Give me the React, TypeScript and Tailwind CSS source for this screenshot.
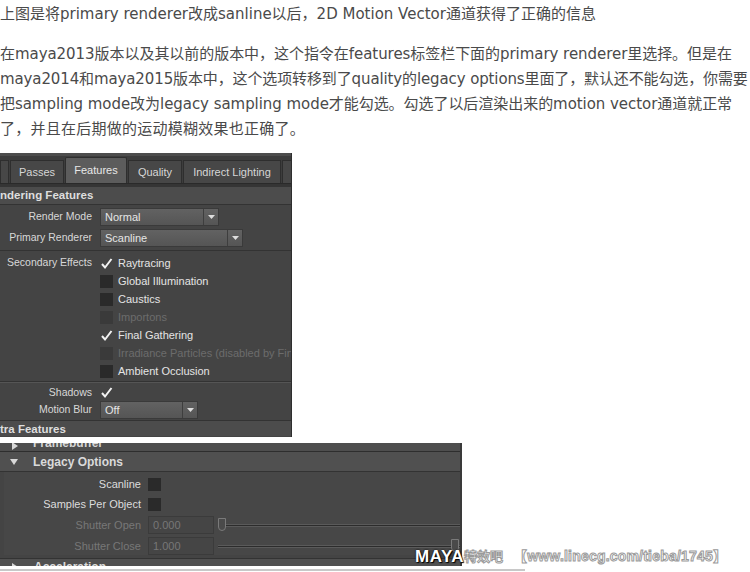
import React from "react";

const cjk = { fontFamily: '"DejaVu Sans", "Noto Sans CJK SC", sans-serif' };
const ui = { fontFamily: '"Liberation Sans", Arial, sans-serif' };
const mark = { fontFamily: '"Liberation Sans", "Noto Sans CJK SC", sans-serif' };

const Check = ({ on, dim }: { on?: boolean; dim?: boolean }) => (
  <span
    className={`w-[13px] h-[13px] flex items-center justify-center shrink-0 ${
      on ? "bg-transparent" : dim ? "bg-[#3a3a3a]" : "bg-[#2a2a2a]"
    }`}
  >
    {on && (
      <svg width="13" height="13" viewBox="0 0 13 13">
        <path d="M2 7 L5 10.5 L11.5 2" stroke="#f2f2f2" strokeWidth="2" fill="none" />
      </svg>
    )}
  </span>
);

const Dropdown = ({ value, width }: { value: string; width: string }) => (
  <div className={`${width} h-[18px] shrink-0 flex bg-gradient-to-b from-[#626262] to-[#555] border border-[#3a3a3a]`}>
    <span className="flex-1 pl-1 text-[11px] leading-[16px] text-[#e6e6e6]">{value}</span>
    <span className="w-[15px] border-l border-[#3e3e3e] flex items-center justify-center">
      <svg width="7" height="4" viewBox="0 0 7 4">
        <path d="M0 0 L7 0 L3.5 4 Z" fill="#ddd" />
      </svg>
    </span>
  </div>
);

const Tab = ({ label, active, w }: { label: string; active?: boolean; w: string }) => (
  <div
    className={`${w} shrink-0 flex items-center justify-center text-[11px] border border-[#2e2e2e] border-b-0 ${
      active ? "h-[26px] bg-[#5c5c5c] text-[#e8e8e8] rounded-t-[2px]" : "h-[23px] bg-[#474747] text-[#d6d6d6]"
    }`}
  >
    {label}
  </div>
);

const Label = ({ text }: { text: string }) => (
  <span className="w-[100px] shrink-0 text-right pr-[8px] text-[10.5px] text-[#d8d8d8] whitespace-nowrap">{text}</span>
);

const EffectRow = ({ label, on, dim, lead, h = "h-[18px]" }: { label: string; on?: boolean; dim?: boolean; lead?: string; h?: string }) => (
  <div className={`flex items-center ${h}`}>
    <Label text={lead ?? ""} />
    <Check on={on} dim={dim} />
    <span className={`ml-[5px] text-[11px] whitespace-nowrap ${dim ? "text-[#6c6c6c]" : "text-[#e4e4e4]"}`}>{label}</span>
  </div>
);

const Slider = ({ pos }: { pos: "start" | "end" }) => (
  <div className="flex-1 relative h-[16px] flex items-center">
    <div className="w-full h-[3px] bg-[#2c2c2c] border-y border-[#5a5a5a]" />
    <span
      className={`absolute top-[1px] w-[8px] h-[13px] bg-[#4a4a4a] border border-[#7a7a7a] rounded-b-[4px] ${
        pos === "start" ? "left-0" : "right-[1px]"
      }`}
    />
  </div>
);

export default function App() {
  return (
    <div className="w-[750px] h-[572px] bg-white overflow-hidden relative" style={cjk}>
      <div className="text-[15px] text-[#4a4a4a]">
        <p className="leading-[25px] pt-[2px] whitespace-nowrap">
          上图是将primary renderer改成sanline以后，2D Motion Vector通道获得了正确的信息
        </p>
        <div className="mt-[15px] leading-[25px] whitespace-nowrap tracking-[-0.05px]">
          <p>在maya2013版本以及其以前的版本中，这个指令在features标签栏下面的primary renderer里选择。但是在</p>
          <p className="tracking-[-0.12px]">maya2014和maya2015版本中，这个选项转移到了quality的legacy options里面了，默认还不能勾选，你需要</p>
          <p>把sampling mode改为legacy sampling mode才能勾选。勾选了以后渲染出来的motion vector通道就正常</p>
          <p className="tracking-[0.25px]">了，并且在后期做的运动模糊效果也正确了。</p>
        </div>
      </div>

      {/* screenshot 1: Features tab */}
      <div className="mt-[11px] w-[292px] h-[284px] overflow-hidden bg-[#444] border-r border-[#2e2e2e]" style={ui}>
        <div className="h-[3px] bg-[#4d4d4d]" />
        <div className="h-[27px] flex items-end gap-[1px] bg-[#3d3d3d]">
          <Tab label="" w="w-[9px]" />
          <Tab label="Passes" w="w-[54px]" />
          <Tab label="Features" active w="w-[62px]" />
          <Tab label="Quality" w="w-[54px]" />
          <Tab label="Indirect Lighting" w="w-[98px]" />
          <Tab label="" w="w-[12px]" />
        </div>
        <div className="h-[4px] bg-[#353535] border-t border-[#2a2a2a]" />
        <div className="h-[18px] bg-[#4c4c4c] border-b border-[#333] text-[11.5px] font-bold text-[#dedede] leading-[17px] whitespace-nowrap">
          ndering Features
        </div>
        <div className="pt-[3px] pb-[3px] flex flex-col gap-[3px]">
          <div className="flex items-center h-[18px]">
            <Label text="Render Mode" />
            <Dropdown value="Normal" width="w-[119px]" />
          </div>
          <div className="flex items-center h-[18px]">
            <Label text="Primary Renderer" />
            <Dropdown value="Scanline" width="w-[143px]" />
          </div>
        </div>
        <div className="pt-[3px] pb-[1px] border-t border-[#333] border-b border-b-[#333]">
          <EffectRow lead="Secondary Effects" label="Raytracing" on />
          <EffectRow label="Global Illumination" />
          <EffectRow label="Caustics" />
          <EffectRow label="Importons" dim />
          <EffectRow label="Final Gathering" on />
          <EffectRow label="Irradiance Particles (disabled by Final Gather)" dim />
          <EffectRow label="Ambient Occlusion" />
        </div>
        <div className="pt-[1px] pb-[1px] border-t border-[#555]">
          <EffectRow lead="Shadows" label="" on h="h-[17px]" />
          <div className="flex items-center h-[18px]">
            <Label text="Motion Blur" />
            <Dropdown value="Off" width="w-[98px]" />
          </div>
        </div>
        <div className="h-[16px] bg-[#4c4c4c] border-t border-[#333] text-[11.5px] font-bold text-[#dedede] leading-[16px] whitespace-nowrap">
          tra Features
        </div>
      </div>

      {/* screenshot 2: Legacy Options */}
      <div className="mt-[6px] w-[462px] h-[123px] overflow-hidden bg-[#444] border-r-2 border-[#3a3a3a]" style={ui}>
        <div className="h-[9px] bg-[#4e4e4e] border-b border-[#2e2e2e] overflow-hidden flex items-end">
          <svg className="ml-[12px] mb-[1px]" width="6" height="8" viewBox="0 0 6 8">
            <path d="M0 0 L6 4 L0 8 Z" fill="#d8d8d8" />
          </svg>
          <div className="ml-[15px] text-[12px] font-bold text-[#d6d6d6] leading-[15px]">Framebuffer</div>
        </div>
        <div className="h-[20px] bg-[#505050] border-b border-[#333] flex items-center">
          <svg className="ml-[10px]" width="8" height="6" viewBox="0 0 8 6">
            <path d="M0 0 L8 0 L4 6 Z" fill="#d8d8d8" />
          </svg>
          <span className="ml-[15px] text-[12px] font-bold text-[#dadada]">Legacy Options</span>
        </div>
        <div className="bg-[#474747] ml-[4px] pt-[4px] flex flex-col gap-[3px]">
          <div className="flex items-center h-[17px]">
            <span className="w-[144px] text-right pr-[7px] text-[11px] text-[#dcdcdc]">Scanline</span>
            <span className="w-[13px] h-[13px] bg-[#2a2a2a]" />
          </div>
          <div className="flex items-center h-[17px]">
            <span className="w-[144px] text-right pr-[7px] text-[11px] text-[#dcdcdc]">Samples Per Object</span>
            <span className="w-[13px] h-[13px] bg-[#2a2a2a]" />
          </div>
          <div className="flex items-center h-[18px]">
            <span className="w-[144px] text-right pr-[7px] text-[11px] text-[#777]">Shutter Open</span>
            <span className="w-[66px] h-[18px] border border-[#3b3b3b] bg-[#454545] text-[11px] text-[#777] pl-1 leading-[16px]">0.000</span>
            <span className="w-[4px]" />
            <Slider pos="start" />
          </div>
          <div className="flex items-center h-[18px]">
            <span className="w-[144px] text-right pr-[7px] text-[11px] text-[#777]">Shutter Close</span>
            <span className="w-[66px] h-[18px] border border-[#3b3b3b] bg-[#454545] text-[11px] text-[#777] pl-1 leading-[16px]">1.000</span>
            <span className="w-[4px]" />
            <Slider pos="end" />
          </div>
        </div>
        <div className="mt-[3px] h-[14px] bg-[#505050] border-t border-[#333] flex items-start">
          <svg className="ml-[12px] mt-[4px]" width="6" height="8" viewBox="0 0 6 8">
            <path d="M0 0 L6 4 L0 8 Z" fill="#d8d8d8" />
          </svg>
          <span className="ml-[16px] text-[12px] font-bold text-[#dadada] leading-[16px]">Acceleration</span>
        </div>
      </div>

      <div className="mt-[3px] w-[525px] h-[2px] bg-[#c8c8c8]" />

      {/* watermark */}
      <div className="absolute left-[415px] top-[544px] flex items-center whitespace-nowrap" style={mark}>
        <span className="text-[17px] font-black text-white tracking-[0.5px] [text-shadow:0_0_2px_#000,1px_1px_1px_#000]">MAYA</span>
        <span className="text-[13px] font-bold text-white [-webkit-text-stroke:1px_#9a9a9a]">特效吧</span>
        <span className="ml-[10px] text-[14px] font-bold text-white tracking-[0.2px] [-webkit-text-stroke:1px_#9a9a9a]">
          【www.linecg.com/tieba/1745】
        </span>
      </div>
    </div>
  );
}
